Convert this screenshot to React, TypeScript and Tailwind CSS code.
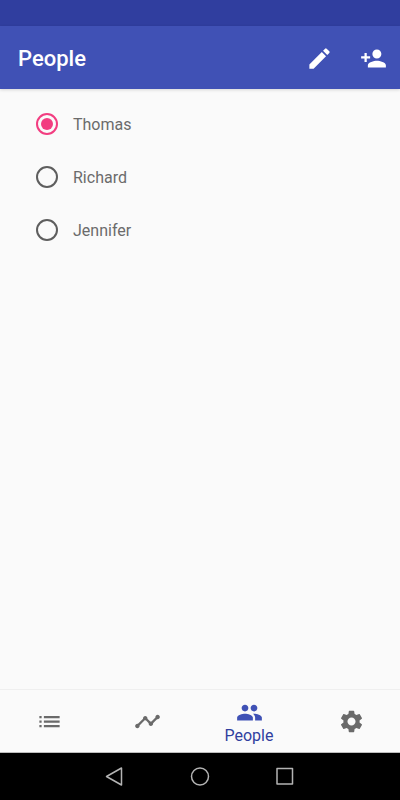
import React, { useState } from "react";
import { MdEdit, MdList, MdPeople, MdPersonAdd, MdSettings, MdTimeline } from "react-icons/md";

const people = ["Thomas", "Richard", "Jennifer"];

const tabs = [
    { id: "list", label: "List", icon: MdList },
    { id: "chart", label: "Chart", icon: MdTimeline },
    { id: "people", label: "People", icon: MdPeople },
    { id: "settings", label: "Settings", icon: MdSettings },
];

export default function App() {
    const [selected, setSelected] = useState("Thomas");
    const [activeTab, setActiveTab] = useState("people");

    return (
        <div className="flex min-h-screen flex-col bg-[#fafafa] font-['Roboto',sans-serif]">
            {/* Status bar */}
            <div className="h-[26px] bg-[#303e9f]" />

            {/* App bar */}
            <header className="flex h-[63px] items-center justify-between bg-[#4051b5] pt-0.5 pr-[13px] pl-[18px] text-white shadow-[0_1px_3px_rgba(0,0,0,0.15)]">
                <h1 className="text-[22px] leading-7 font-medium">People</h1>
                <div className="flex gap-[27px]">
                    <button aria-label="Edit">
                        <MdEdit size={27} />
                    </button>
                    <button aria-label="Add person">
                        <MdPersonAdd size={27} />
                    </button>
                </div>
            </header>

            {/* People list */}
            <main className="flex-1 pt-6 pl-9">
                {people.map((name) => (
                    <label key={name} className="flex h-[53px] items-start gap-[15px]">
                        <input
                            type="radio"
                            name="person"
                            checked={selected === name}
                            onChange={() => setSelected(name)}
                            className="grid size-[22px] appearance-none place-items-center rounded-full border-2 border-[#5e5e5e] before:size-3 before:rounded-full checked:border-[#f23d80] checked:before:bg-[#f23d80]"
                        />
                        <span className="text-base text-[#6b6b6b]">{name}</span>
                    </label>
                ))}
            </main>

            {/* Bottom tabs */}
            <nav className="flex h-16 border-t border-b border-t-[#efefef] border-b-[#bdbdbd]">
                {tabs.map(({ id, label, icon: Icon }) => {
                    const active = id === activeTab;
                    return (
                        <button
                            key={id}
                            aria-label={label}
                            onClick={() => setActiveTab(id)}
                            className={`flex flex-col items-center justify-center ${
                                active ? "flex-[106] pt-0.5 text-[#3f51b5]" : "flex-[98] text-[#6a6a6a]"
                            }`}
                        >
                            <Icon size={27} />
                            {active && <span className="text-base leading-5 text-[#303f9f]">{label}</span>}
                        </button>
                    );
                })}
            </nav>

            {/* System navigation */}
            <div className="flex h-[47px] items-center justify-center gap-[65px] bg-black text-[#b4b4b4]">
                <button aria-label="Back">
                    <svg width="20" height="20" viewBox="0 0 20 20" fill="none" stroke="currentColor" strokeWidth="1.5" strokeLinejoin="round">
                        <path d="M16.5 1v17L1.5 9.5z" />
                    </svg>
                </button>
                <button aria-label="Home">
                    <svg width="20" height="20" viewBox="0 0 20 20" fill="none" stroke="currentColor" strokeWidth="1.5">
                        <circle cx="10" cy="9.5" r="8.5" />
                    </svg>
                </button>
                <button aria-label="Recent apps">
                    <svg width="20" height="20" viewBox="0 0 20 20" fill="none" stroke="currentColor" strokeWidth="1.5" strokeLinejoin="round">
                        <path d="M2 1.5h15.5V17H2z" />
                    </svg>
                </button>
            </div>
        </div>
    );
}
